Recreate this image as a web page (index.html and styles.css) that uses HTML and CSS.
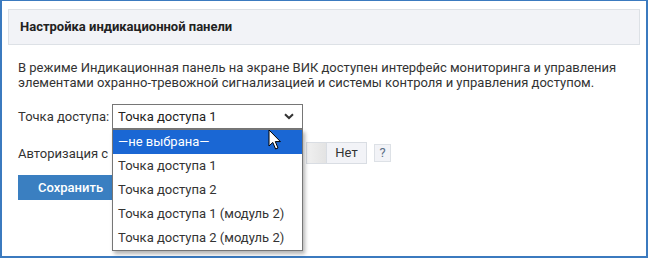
FILE: index.html
```html
<!DOCTYPE html>
<html>
<head>
	<title>Настройка индикационной панели</title>
	<link rel="stylesheet" href="styles.css">
</head>
<body>

	<div class="window">
		<div class="panel-head">Настройка индикационной панели</div>

		<p class="intro">В режиме Индикационная панель на экране ВИК доступен интерфейс мониторинга и управления<br>элементами охранно-тревожной сигнализацией и системы контроля и управления доступом.</p>

		<div class="row">
			<span class="label">Точка доступа:</span>
			<div class="select-wrap">
				<div class="select">
					<span>Точка доступа 1</span>
					<svg class="chevron" width="10" height="7" viewBox="0 0 10 7"><path d="M1 1.2 L5 5 L9 1.2" fill="none" stroke="#333" stroke-width="2"/></svg>
				</div>
				<ul class="options">
					<li class="active">—не выбрана—</li>
					<li>Точка доступа 1</li>
					<li>Точка доступа 2</li>
					<li>Точка доступа 1 (модуль 2)</li>
					<li>Точка доступа 2 (модуль 2)</li>
				</ul>
				<svg class="cursor" width="14" height="22" viewBox="0 0 14 22"><path d="M1 1 L1 17 L4.8 13.4 L7.6 20 L10 19 L7.3 12.6 L12.4 12.6 Z" fill="#fff" stroke="#000" stroke-width="1" stroke-linejoin="round"/></svg>
			</div>
		</div>

		<div class="row auth">
			<span class="label wide">Авторизация с</span>
			<div class="toggle">
				<span class="knob"></span>
				<span class="toggle-text">Нет</span>
			</div>
			<span class="help">?</span>
		</div>

		<button class="save">Сохранить</button>
	</div>

</body>
</html>
```

FILE: styles.css
```css
	*{
		box-sizing: border-box;
	}

	body{
		margin: 0;
		font-family: Roboto, "Liberation Sans", sans-serif;
		font-size: 13px;
		color: #333;
	}

	.window{
		width: 648px;
		height: 258px;
		border: 2px solid #3b7abf;
		border-top-width: 1px;
		padding: 8px 6px;
		background: #fff;
	}

	.panel-head{
		height: 36px;
		padding: 0 11px;
		line-height: 34px;
		font-weight: bold;
		color: #222;
		background: #f2f3f7;
		border: 1px solid #dde1e6;
	}

	.intro{
		margin: 15px 0 0 10px;
		line-height: 15px;
	}

	.row{
		display: flex;
		align-items: center;
		margin: 14px 0 0 10px;
	}

	.label{
		width: 94px;
	}

	.label.wide{
		width: 288px;
		white-space: nowrap;
	}

	.select-wrap{
		position: relative;
	}

	.select{
		width: 191px;
		height: 25px;
		padding: 0 8px 0 5px;
		border: 1px solid #767676;
		display: flex;
		align-items: center;
		justify-content: space-between;
		color: #222;
	}

	.options{
		position: absolute;
		top: 25px;
		left: 0;
		z-index: 2;
		width: 191px;
		margin: 0;
		padding: 0;
		list-style: none;
		background: #fff;
		border: 1px solid #767676;
		box-shadow: 2px 3px 4px rgba(0,0,0,.3);
	}

	.options li{
		height: 24px;
		line-height: 24px;
		padding-left: 5px;
		color: #333;
	}

	.options li.active{
		background: #1a67d4;
		color: #fff;
	}

	.cursor{
		position: absolute;
		top: 25px;
		left: 156px;
		z-index: 3;
	}

	.auth{
		margin-top: 13px;
	}

	.toggle{
		display: flex;
		height: 22px;
		border: 1px solid #d9dde3;
		background: #f2f3f7;
	}

	.knob{
		width: 20px;
		background: linear-gradient(to right, #f0f0f0, #e3e3e3);
		border-right: 1px solid #d9dde3;
	}

	.toggle-text{
		width: 39px;
		line-height: 20px;
		text-align: center;
		color: #333;
	}

	.help{
		margin-left: 7px;
		width: 17px;
		height: 18px;
		line-height: 16px;
		text-align: center;
		color: #5b6f86;
		background: #f2f3f7;
		border: 1px solid #dde1e6;
	}

	.save{
		display: block;
		margin: 11px 0 0 10px;
		padding: 0 20px;
		height: 25px;
		border: 0;
		font-family: inherit;
		font-size: 13px;
		font-weight: 500;
		color: #fff;
		background: #3a7fc1;
	}
```
